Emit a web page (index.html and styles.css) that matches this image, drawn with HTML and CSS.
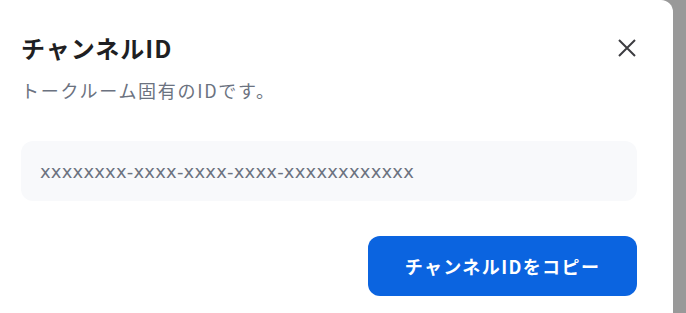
FILE: index.html
```html
<!DOCTYPE html>
<html lang="ja">

<head>
    <meta charset="utf-8">
    <title>チャンネルID</title>
    <link rel="stylesheet" href="styles.css">
</head>

<body>
    <div class="modal">
        <!-- Header -->
        <div class="modal-header">
            <h2 class="modal-title">チャンネルID</h2>
            <button class="close-button" aria-label="閉じる">
                <svg width="20" height="20" viewBox="0 0 20 20">
                    <path d="M2 2 L18 18 M18 2 L2 18" stroke="#3c3c40" stroke-width="2" stroke-linecap="butt" fill="none" />
                </svg>
            </button>
        </div>
        <p class="modal-description">トークルーム固有のIDです。</p>

        <!-- ID field -->
        <div class="id-field">xxxxxxxx-xxxx-xxxx-xxxx-xxxxxxxxxxxx</div>

        <div class="modal-actions">
            <button class="copy-button">チャンネルIDをコピー</button>
        </div>
    </div>
</body>

</html>
```

FILE: styles.css
```css
body {
    margin: 0;
    padding: 0;
    overflow: hidden;
    background-color: #999999;
    font-family: "Noto Sans CJK JP", "Noto Sans", sans-serif;
}

.modal {
    width: 673px;
    height: 313px;
    box-sizing: border-box;
    background-color: #ffffff;
    border-top-right-radius: 12px;
    padding: 28px 36px 0 21px;
}

.modal-header {
    display: flex;
    justify-content: space-between;
    align-items: center;
}

.modal-title {
    margin: 0;
    font-size: 24px;
    font-weight: 700;
    line-height: 40px;
    letter-spacing: 1px;
    color: #1f1f23;
}

.close-button {
    border: none;
    background: none;
    padding: 0;
    width: 20px;
    height: 20px;
    display: flex;
}

.modal-description {
    margin: 8px 0 0 0;
    font-size: 18px;
    line-height: 28px;
    letter-spacing: 1.7px;
    color: #6b7280;
}

.id-field {
    margin-top: 37px;
    height: 60px;
    box-sizing: border-box;
    padding: 0 19px;
    display: flex;
    align-items: center;
    background-color: #f8f9fb;
    border-radius: 12px;
    font-family: "DejaVu Sans", sans-serif;
    font-size: 18px;
    letter-spacing: 0.2px;
    color: #6b7280;
}

.modal-actions {
    display: flex;
    justify-content: flex-end;
    margin-top: 35px;
}

.copy-button {
    width: 269px;
    height: 60px;
    border: none;
    border-radius: 12px;
    background-color: #0b64e0;
    color: #ffffff;
    font-family: inherit;
    font-size: 18px;
    font-weight: 700;
    letter-spacing: 1.4px;
}
```
